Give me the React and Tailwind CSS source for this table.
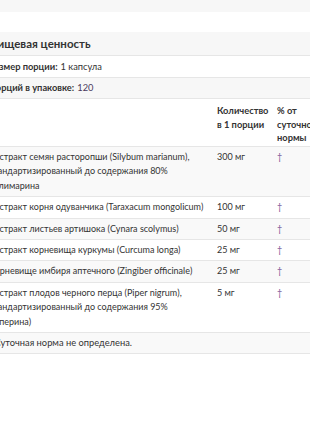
import React from "react";

const rows = [
  {
    name: "Экстракт семян расторопши (Silybum marianum), стандартизированный до содержания 80% силимарина",
    amount: "300 мг",
  },
  { name: "Экстракт корня одуванчика (Taraxacum mongolicum)", amount: "100 мг" },
  { name: "Экстракт листьев артишока (Cynara scolymus)", amount: "50 мг" },
  { name: "Экстракт корневища куркумы (Curcuma longa)", amount: "25 мг" },
  { name: "Корневище имбиря аптечного (Zingiber officinale)", amount: "25 мг" },
  {
    name: "Экстракт плодов черного перца (Piper nigrum), стандартизированный до содержания 95% пиперина)",
    amount: "5 мг",
  },
];

const App = () => {
  return (
    <div
      className="w-[310px] h-[430px] overflow-hidden bg-white text-[#333]"
      style={{ fontFamily: "Lato, 'Open Sans', sans-serif" }}
    >
      <div className="-ml-[19px] w-[380px]">
        <div className="h-[12px] bg-[#f7f7f7]" />
        <div className="h-[20px]" />

        {/* Title */}
        <div className="bg-[#f7f7f7] border-b border-[#e6e6e6] h-[24px] pl-2 flex items-center">
          <h2 className="text-[11.5px] font-bold leading-none">Пищевая ценность</h2>
        </div>

        <div className="border-b border-[#e6e6e6] h-[22px] pl-2 flex items-center text-[9.3px]">
          <span className="font-bold">Размер порции:</span>
          <span className="ml-[3px]">1 капсула</span>
        </div>
        <div className="bg-[#f7f7f7] border-b border-[#e6e6e6] h-[21px] pl-2 flex items-center text-[9.3px]">
          <span className="font-bold">Порций в упаковке:</span>
          <span className="ml-[3px] text-[#4a3a5c]">120</span>
        </div>

        {/* Table header */}
        <div className="grid grid-cols-[228px_60px_70px] text-[9.3px] leading-[13.5px] font-bold border-b border-[#e6e6e6] h-[48px]">
          <div className="pl-2 pt-[6px]" />
          <div className="pl-2 pt-[5px]">Количество в 1 порции</div>
          <div className="px-2 pt-[5px]">% от суточной нормы</div>
        </div>

        {rows.map((r, i) => (
          <div
            key={i}
            className={`grid grid-cols-[228px_60px_70px] text-[9px] leading-[14.4px] border-b border-[#e6e6e6] ${
              i % 2 === 0 ? "bg-[#f9f9f9]" : "bg-white"
            }`}
          >
            <div className="pl-2 pr-[2px] py-[3px]">{r.name}</div>
            <div className="pl-2 py-[3px]">{r.amount}</div>
            <div className="px-2 py-[3px] text-[#7a5a9a]">†</div>
          </div>
        ))}

        <div className="bg-[#f9f9f9] border-b border-[#e6e6e6] h-[21px] pl-2 flex items-center text-[9.3px]">
          †Суточная норма не определена.
        </div>
      </div>
    </div>
  );
};

export default App;
